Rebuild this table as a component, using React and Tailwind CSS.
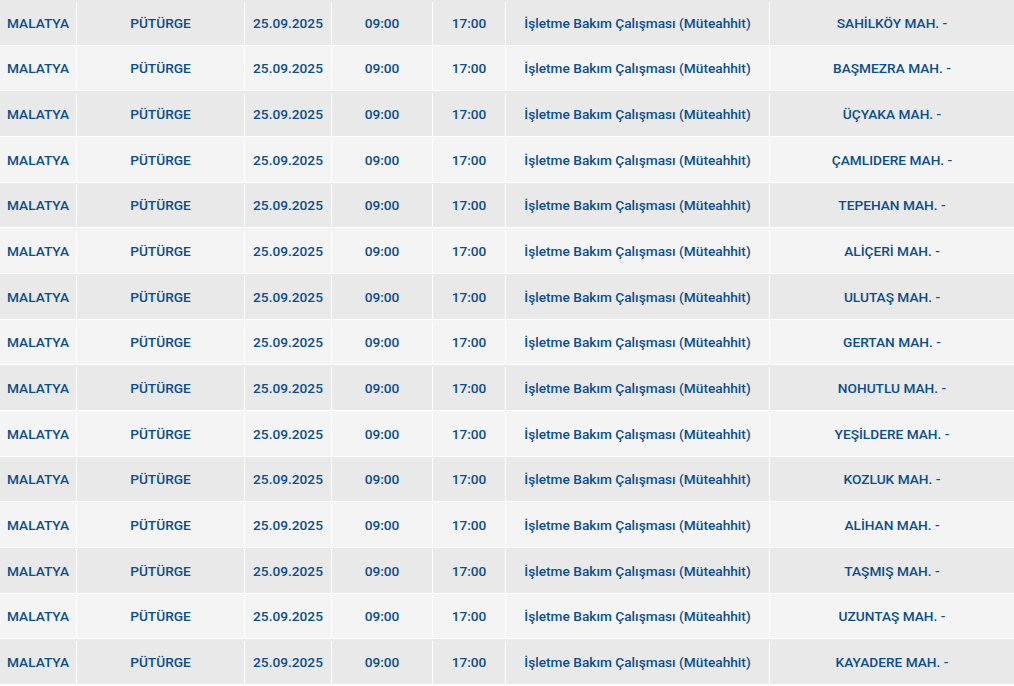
import React from "react";

const places = [
  "SAHİLKÖY MAH. -",
  "BAŞMEZRA MAH. -",
  "ÜÇYAKA MAH. -",
  "ÇAMLIDERE MAH. -",
  "TEPEHAN MAH. -",
  "ALİÇERİ MAH. -",
  "ULUTAŞ MAH. -",
  "GERTAN MAH. -",
  "NOHUTLU MAH. -",
  "YEŞİLDERE MAH. -",
  "KOZLUK MAH. -",
  "ALİHAN MAH. -",
  "TAŞMIŞ MAH. -",
  "UZUNTAŞ MAH. -",
  "KAYADERE MAH. -",
];

const rows = places.map((place) => ({
  city: "MALATYA",
  district: "PÜTÜRGE",
  date: "25.09.2025",
  start: "09:00",
  end: "17:00",
  reason: "İşletme Bakım Çalışması (Müteahhit)",
  place,
}));

const App = () => {
  return (
    <div
      className="w-[1014px] h-[686px] overflow-hidden bg-white text-[13.7px] font-medium text-[#0c4e8b]"
      style={{ fontFamily: "Roboto, 'Liberation Sans', sans-serif" }}
    >
      {rows.map((r, i) => (
        <div
          key={i}
          className={`grid grid-cols-[76px_168px_87px_101px_73px_264px_245px] h-[45.66px] border-b-[1.6px] border-white pt-[1.5px] ${
            i % 2 === 0 ? "bg-[#e9e9e9]" : "bg-[#f4f4f4]"
          }`}
        >
          <div className="flex items-center justify-center">{r.city}</div>
          <div className="flex items-center justify-center border-l-[1.5px] border-white">{r.district}</div>
          <div className="flex items-center justify-center border-l-[1.5px] border-white">{r.date}</div>
          <div className="flex items-center justify-center border-l-[1.5px] border-white">{r.start}</div>
          <div className="flex items-center justify-center border-l-[1.5px] border-white">{r.end}</div>
          <div className="flex items-center justify-center border-l-[1.5px] border-white">{r.reason}</div>
          <div className="flex items-center justify-center border-l-[1.5px] border-white">{r.place}</div>
        </div>
      ))}
    </div>
  );
};

export default App;
